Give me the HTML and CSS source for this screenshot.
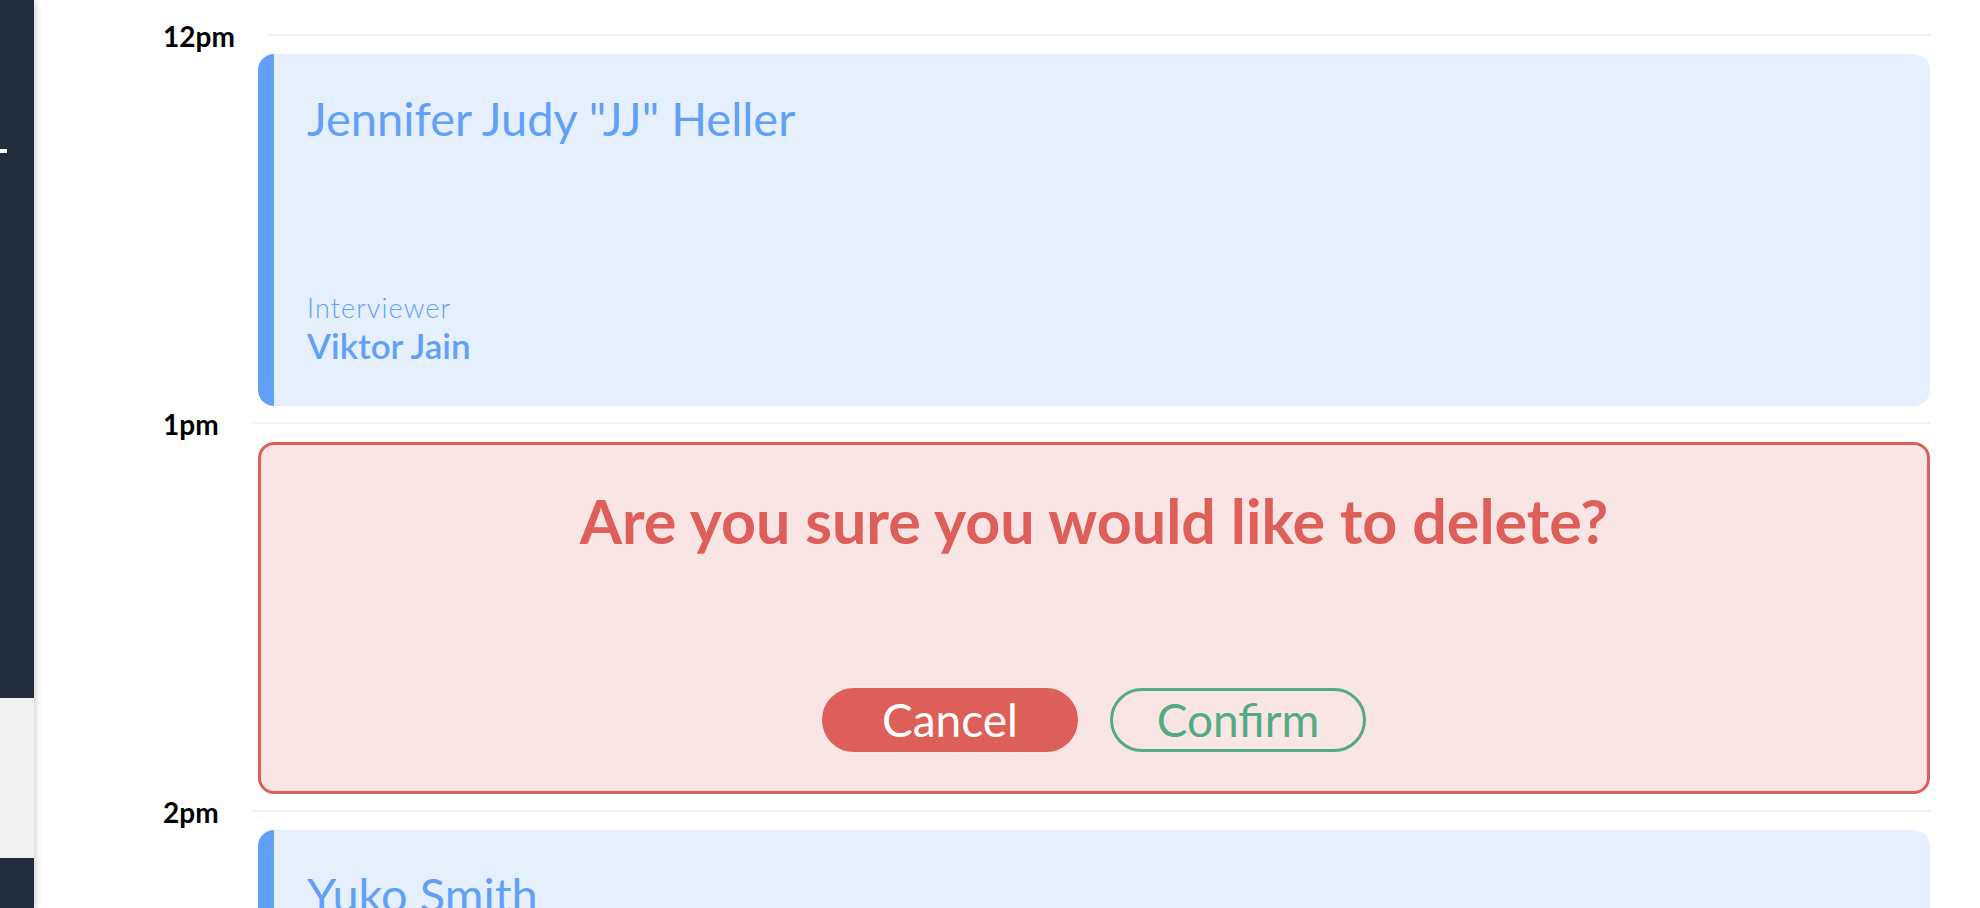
FILE: index.html
```html
<!DOCTYPE html>
<html lang="en">
<head>
<meta charset="utf-8">
<title>Schedule</title>
<link rel="stylesheet" href="styles.css">
</head>
<body>
<div class="app">
  <aside class="sidebar">
    <div class="side-top"><span class="side-mark"></span></div>
    <div class="side-panel"></div>
    <div class="side-bottom"></div>
  </aside>
  <main class="timeline">
    <section class="slot">
      <div class="slot-head"><span class="hour">12pm</span><span class="rule"></span></div>
      <article class="card">
        <h2 class="card-name">Jennifer Judy "JJ" Heller</h2>
        <div class="card-meta">
          <div class="meta-label">Interviewer</div>
          <div class="meta-value">Viktor Jain</div>
        </div>
      </article>
    </section>
    <section class="slot">
      <div class="slot-head"><span class="hour">1pm</span><span class="rule"></span></div>
      <div class="confirm-box">
        <h2 class="confirm-title">Are you sure you would like to delete?</h2>
        <div class="confirm-actions">
          <button class="btn btn-cancel">Cancel</button>
          <button class="btn btn-confirm">Confirm</button>
        </div>
      </div>
    </section>
    <section class="slot">
      <div class="slot-head"><span class="hour">2pm</span><span class="rule"></span></div>
      <article class="card">
        <h2 class="card-name">Yuko Smith</h2>
        <div class="card-meta">
          <div class="meta-label">Interviewer</div>
          <div class="meta-value">Viktor Jain</div>
        </div>
      </article>
    </section>
  </main>
</div>
</body>
</html>
```

FILE: styles.css
```css
* { box-sizing: border-box; }
html, body {
  margin: 0;
  padding: 0;
  height: 100%;
  background: #ffffff;
  font-family: Lato, "Liberation Sans", sans-serif;
  overflow: hidden;
}
.app {
  display: flex;
  height: 100vh;
  overflow: hidden;
}
.sidebar {
  width: 34px;
  flex: 0 0 34px;
  display: flex;
  flex-direction: column;
  box-shadow: 2px 0 6px rgba(0, 0, 0, 0.18);
  position: relative;
  z-index: 1;
}
.side-top {
  height: 698px;
  background: #222d3c;
  padding-top: 149px;
}
.side-mark {
  display: block;
  width: 7px;
  height: 4px;
  background: #ffffff;
}
.side-panel {
  height: 160px;
  background: #f2f2f2;
}
.side-bottom {
  flex: 1;
  background: #222d3c;
}
.timeline {
  flex: 1;
  padding: 34px 50px 0 0;
  overflow: hidden;
}
.slot-head {
  display: flex;
  align-items: center;
  gap: 33px;
  height: 2px;
  padding-left: 129px;
}
.hour {
  font-size: 28px;
  font-weight: 700;
  line-height: 1;
  color: #000000;
  margin-top: 2px;
}
.rule {
  flex: 1;
  height: 2px;
  background: #f1f1f1;
}
.card,
.confirm-box {
  margin: 18px 0 16px 224px;
  height: 352px;
  border-radius: 16px;
}
.card {
  background: #e6f0fd;
  border-left: 16px solid #62a0f8;
  padding: 36px 32px 40px 33px;
  display: flex;
  flex-direction: column;
  justify-content: space-between;
  color: #62a0f8;
}
.card-name {
  margin: 0;
  font-size: 47px;
  font-weight: 400;
  line-height: 1.2;
}
.meta-label {
  font-size: 27px;
  font-weight: 300;
  letter-spacing: 1.1px;
  line-height: 1.2;
}
.meta-value {
  font-size: 35px;
  font-weight: 600;
  line-height: 1.2;
}
.confirm-box {
  background: #f9e5e4;
  border: 3px solid #de5f5a;
  padding: 39px;
  display: flex;
  flex-direction: column;
  align-items: center;
  justify-content: space-between;
}
.confirm-title {
  margin: 0;
  font-size: 61px;
  font-weight: 700;
  line-height: 1.2;
  color: #de5f5a;
}
.confirm-actions {
  display: flex;
  gap: 32px;
}
.btn {
  width: 256px;
  height: 64px;
  border-radius: 32px;
  font-family: Lato, "Liberation Sans", sans-serif;
  font-size: 46px;
  font-weight: 400;
  line-height: 1;
  padding: 0;
  display: flex;
  align-items: center;
  justify-content: center;
  cursor: pointer;
}
.btn-cancel {
  background: #de5f5a;
  border: 3px solid #de5f5a;
  color: #ffffff;
}
.btn-confirm {
  background: transparent;
  border: 3px solid #53ab84;
  color: #53ab84;
}
```
